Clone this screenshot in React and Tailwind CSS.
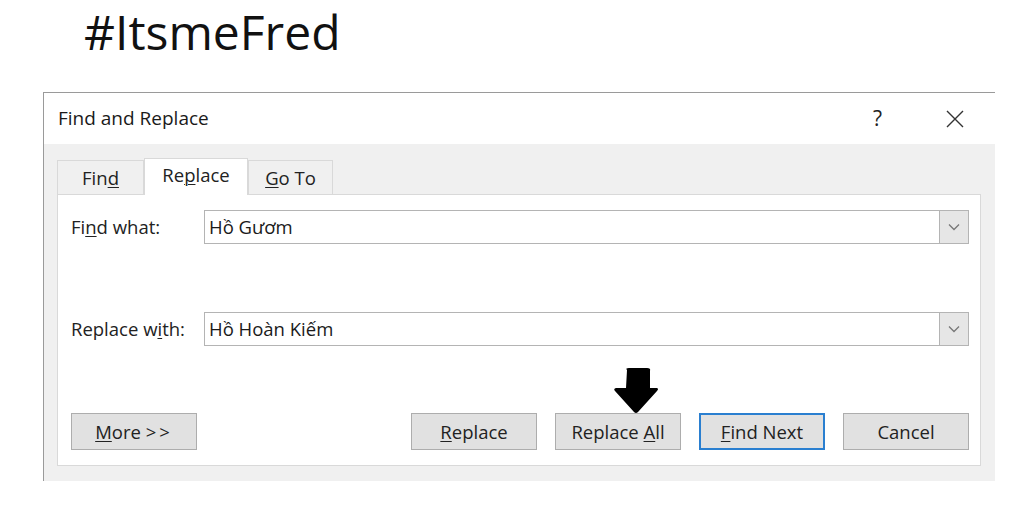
import React from 'react';

const font = { fontFamily: '"Open Sans", "Noto Sans", sans-serif' };

function U({ children }) {
  return <span className="underline underline-offset-2 decoration-1">{children}</span>;
}

function Combo({ value }) {
  return (
    <div className="flex-1 h-[34px] flex items-center border border-[#b4b4b4] bg-white">
      <span className="flex-1 pl-[4px] text-[18.5px] text-[#1a1a1a]">{value}</span>
      <div className="w-[29px] h-full flex items-center justify-center bg-[#e6e6e6] border-l border-[#b4b4b4]">
        <svg width="12" height="8" viewBox="0 0 12 8">
          <path d="M1 1.5 L6 6.5 L11 1.5" fill="none" stroke="#777" strokeWidth="1.3" />
        </svg>
      </div>
    </div>
  );
}

function Btn({ children, primary }) {
  return (
    <button
      className={`w-[126px] h-[37px] text-[18.5px] text-[#222] bg-[#e1e1e1] ${
        primary ? 'border-2 border-[#2a7fd0]' : 'border border-[#adadad]'
      }`}
    >
      {children}
    </button>
  );
}

export default function App() {
  return (
    <div className="w-[1024px] h-[523px] bg-white overflow-hidden" style={font}>
      <div className="pl-[84px] h-[92px] text-[48px] leading-[64px] text-[#111]">#ItsmeFred</div>

      {/* dialog */}
      <div className="ml-[43px] w-[952px] h-[389px] border-l border-t border-[#9a9a9a] flex flex-col">
        <div className="h-[51px] bg-white flex items-center pl-[14px] text-[19px] text-[#1a1a1a]">
          <span className="flex-1">Find and Replace</span>
          <span className="w-[20px] text-[21px] text-[#222] mr-[52px]">?</span>
          <svg width="20" height="20" viewBox="0 0 20 20" className="mr-[30px]">
            <path d="M2 2 L18 18 M18 2 L2 18" stroke="#333" strokeWidth="1.4" />
          </svg>
        </div>

        <div className="flex-1 bg-[#f0f0f0] pl-[13px] pr-[14px] pt-[13px] pb-[15px] flex flex-col">
          {/* tabs */}
          <div className="flex items-end h-[37px] text-[18.5px] text-[#222]">
            <div className="w-[87px] h-[34px] flex items-center justify-center border border-b-0 border-[#d9d9d9] bg-[#f0f0f0]">
              Fin<U>d</U>
            </div>
            <div className="w-[104px] h-[37px] -mb-px pb-[4px] flex items-center justify-center border border-b-0 border-[#d9d9d9] bg-white relative z-10">
              Re<U>p</U>lace
            </div>
            <div className="w-[85px] h-[34px] flex items-center justify-center border border-b-0 border-[#d9d9d9] bg-[#f0f0f0]">
              <U>G</U>o To
            </div>
          </div>

          {/* panel */}
          <div className="flex-1 bg-white border border-[#d9d9d9] pl-[13px] pr-[11px] pt-[15px] flex flex-col">
            <div className="flex items-center">
              <span className="w-[133px] text-[18.5px] text-[#222]">
                Fi<U>n</U>d what:
              </span>
              <Combo value="Hồ Gươm" />
            </div>
            <div className="flex items-center mt-[68px]">
              <span className="w-[133px] text-[18.5px] text-[#222]">
                Replace w<U>i</U>th:
              </span>
              <Combo value="Hồ Hoàn Kiếm" />
            </div>

            <div className="flex items-end mt-[67px]">
              <Btn>
                <U>M</U>ore <span className="tracking-[3px]">&gt;&gt;</span>
              </Btn>
              <div className="flex-1" />
              <div className="flex items-end gap-[18px]">
                <Btn>
                  <U>R</U>eplace
                </Btn>
                <div className="relative">
                  <svg
                    width="46"
                    height="46"
                    viewBox="0 0 46 46"
                    className="absolute left-[58px] -top-[45px]"
                  >
                    <path
                      d="M14 2 Q12 0 16 0 L34 0 Q38 0 37 3 L37 20 L44 20 Q46 21 44 23 L25 44 Q23 46 21 44 L2 23 Q0 21 3 20 L13 20 Z"
                      fill="#000"
                    />
                  </svg>
                  <Btn>
                    Replace <U>A</U>ll
                  </Btn>
                </div>
                <Btn primary>
                  <U>F</U>ind Next
                </Btn>
                <Btn>Cancel</Btn>
              </div>
            </div>
          </div>
        </div>
      </div>
    </div>
  );
}
